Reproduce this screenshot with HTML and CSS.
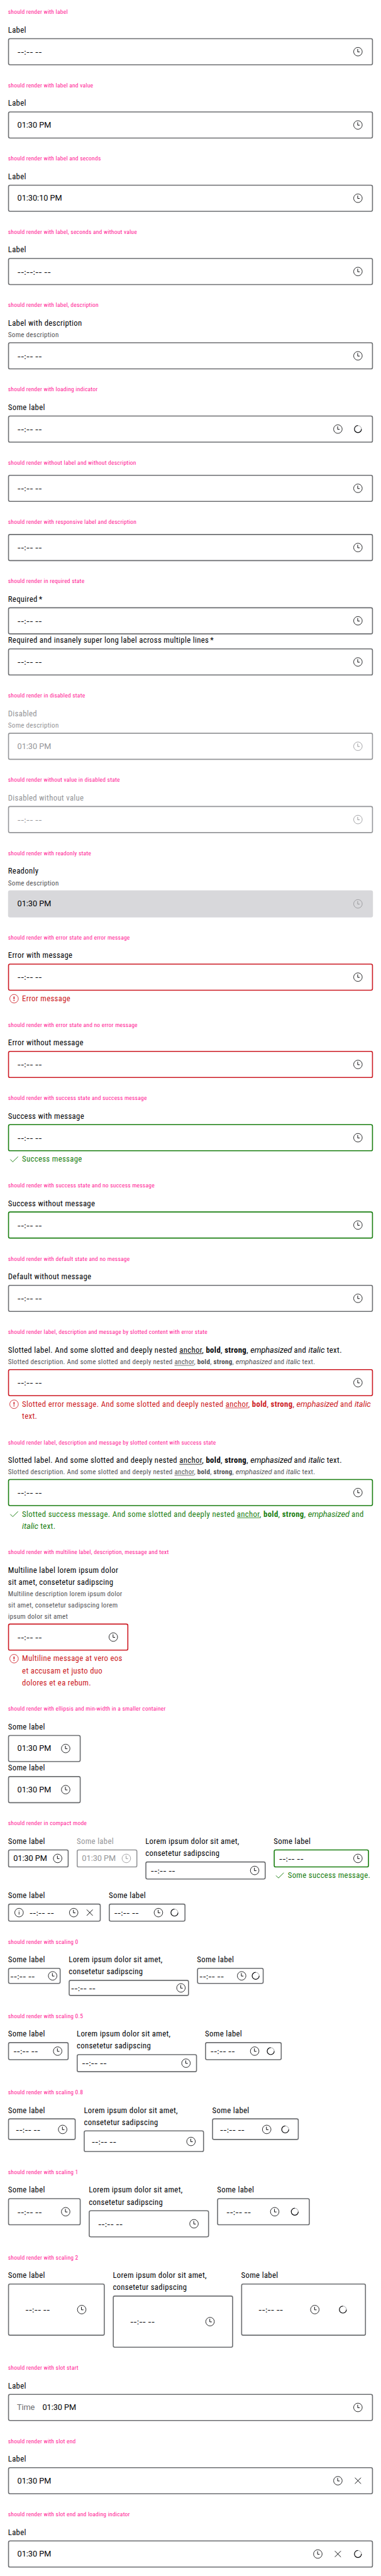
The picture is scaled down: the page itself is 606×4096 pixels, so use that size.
FILE: index.html
```html
<!DOCTYPE html>
<html lang="en">
<head>
<meta charset="utf-8">
<title>Input time overview</title>
<link rel="stylesheet" href="styles.css">
</head>
<body>
<svg class="sprite" aria-hidden="true">
  <symbol id="clock" viewBox="0 0 24 24"><circle cx="12" cy="12" r="8.55" fill="none" stroke="currentColor" stroke-width="1.05"/><path d="M11.5 6.6V12.5H15.5" fill="none" stroke="currentColor" stroke-width="1.2"/></symbol>
  <symbol id="close" viewBox="0 0 24 24"><path d="M6 6L18 18M18 6L6 18" fill="none" stroke="currentColor" stroke-width="1.2"/></symbol>
  <symbol id="spin" viewBox="0 0 24 24"><g fill="none" stroke-width="1.5"><path d="M12 5A7 7 0 0 1 19 12" stroke="#8c8d90" stroke-width="1"/><path d="M19 12A7 7 0 1 1 12 5" stroke="currentColor"/></g></symbol>
  <symbol id="error" viewBox="0 0 24 24"><circle cx="12" cy="12" r="8.55" fill="none" stroke="currentColor" stroke-width="1.05"/><path d="M12 7.6V13M12 14.5V16.4" fill="none" stroke="currentColor" stroke-width="2"/></symbol>
  <symbol id="info" viewBox="0 0 24 24"><circle cx="12" cy="12" r="8.55" fill="none" stroke="currentColor" stroke-width="1.05"/><path d="M12 8V9.2M12 10.5V16" fill="none" stroke="currentColor" stroke-width="1.1"/></symbol>
  <symbol id="check" viewBox="0 0 24 24"><path d="M4.5 12.2L9.4 17.1L20 6.7" fill="none" stroke="currentColor" stroke-width="1.2"/></symbol>
</svg>
<div class="frame">
<main class="page">
  <section><h2>should render with label</h2>
    <div class="field"><label>Label</label><div class="box"><span class="empty">--:-- --</span><svg><use href="#clock"/></svg></div></div></section>
  <section><h2>should render with label and value</h2>
    <div class="field"><label>Label</label><div class="box"><span class="value">01:30 PM</span><svg><use href="#clock"/></svg></div></div></section>
  <section><h2>should render with label and seconds</h2>
    <div class="field"><label>Label</label><div class="box"><span class="value">01:30:10 PM</span><svg><use href="#clock"/></svg></div></div></section>
  <section><h2>should render with label, seconds and without value</h2>
    <div class="field"><label>Label</label><div class="box"><span class="empty">--:--:-- --</span><svg><use href="#clock"/></svg></div></div></section>
  <section><h2>should render with label, description</h2>
    <div class="field"><label>Label with description</label><p class="desc">Some description</p><div class="box"><span class="empty">--:-- --</span><svg><use href="#clock"/></svg></div></div></section>
  <section><h2>should render with loading indicator</h2>
    <div class="field"><label>Some label</label><div class="box"><span class="empty">--:-- --</span><svg><use href="#clock"/></svg><svg><use href="#spin"/></svg></div></div></section>
  <section><h2>should render without label and without description</h2>
    <div class="field"><div class="box"><span class="empty">--:-- --</span><svg><use href="#clock"/></svg></div></div></section>
  <section><h2>should render with responsive label and description</h2>
    <div class="field"><div class="box"><span class="empty">--:-- --</span><svg><use href="#clock"/></svg></div></div></section>
  <section><h2>should render in required state</h2>
    <div class="field"><label>Required <span class="star">*</span></label><div class="box"><span class="empty">--:-- --</span><svg><use href="#clock"/></svg></div></div>
    <div class="field"><label>Required and insanely super long label across multiple lines <span class="star">*</span></label><div class="box"><span class="empty">--:-- --</span><svg><use href="#clock"/></svg></div></div></section>
  <section><h2>should render in disabled state</h2>
    <div class="field disabled"><label>Disabled</label><p class="desc">Some description</p><div class="box"><span class="value">01:30 PM</span><svg><use href="#clock"/></svg></div></div></section>
  <section><h2>should render without value in disabled state</h2>
    <div class="field disabled"><label>Disabled without value</label><div class="box"><span class="empty">--:-- --</span><svg><use href="#clock"/></svg></div></div></section>
  <section><h2>should render with readonly state</h2>
    <div class="field readonly"><label>Readonly</label><p class="desc">Some description</p><div class="box"><span class="value">01:30 PM</span><svg><use href="#clock"/></svg></div></div></section>
  <section><h2>should render with error state and error message</h2>
    <div class="field error"><label>Error with message</label><div class="box"><span class="empty">--:-- --</span><svg><use href="#clock"/></svg></div><div class="msg"><svg><use href="#error"/></svg><p>Error message</p></div></div></section>
  <section><h2>should render with error state and no error message</h2>
    <div class="field error"><label>Error without message</label><div class="box"><span class="empty">--:-- --</span><svg><use href="#clock"/></svg></div></div></section>
  <section><h2>should render with success state and success message</h2>
    <div class="field success"><label>Success with message</label><div class="box"><span class="empty">--:-- --</span><svg><use href="#clock"/></svg></div><div class="msg"><svg><use href="#check"/></svg><p>Success message</p></div></div></section>
  <section><h2>should render with success state and no success message</h2>
    <div class="field success"><label>Success without message</label><div class="box"><span class="empty">--:-- --</span><svg><use href="#clock"/></svg></div></div></section>
  <section><h2>should render with default state and no message</h2>
    <div class="field"><label>Default without message</label><div class="box"><span class="empty">--:-- --</span><svg><use href="#clock"/></svg></div></div></section>
  <section class="slotted"><h2>should render label, description and message by slotted content with error state</h2>
    <div class="field error"><label>Slotted label. And some slotted and deeply nested <a>anchor</a>, <b>bold</b>, <strong>strong</strong>, <em>emphasized</em> and <i>italic</i> text.</label><p class="desc">Slotted description. And some slotted and deeply nested <a>anchor</a>, <b>bold</b>, <strong>strong</strong>, <em>emphasized</em> and <i>italic</i> text.</p><div class="box"><span class="empty">--:-- --</span><svg><use href="#clock"/></svg></div><div class="msg"><svg><use href="#error"/></svg><p>Slotted error message. And some slotted and deeply nested <a>anchor</a>, <b>bold</b>, <strong>strong</strong>, <em>emphasized</em> and <i>italic</i><br>text.</p></div></div></section>
  <section class="slotted"><h2>should render label, description and message by slotted content with success state</h2>
    <div class="field success"><label>Slotted label. And some slotted and deeply nested <a>anchor</a>, <b>bold</b>, <strong>strong</strong>, <em>emphasized</em> and <i>italic</i> text.</label><p class="desc">Slotted description. And some slotted and deeply nested <a>anchor</a>, <b>bold</b>, <strong>strong</strong>, <em>emphasized</em> and <i>italic</i> text.</p><div class="box"><span class="empty">--:-- --</span><svg><use href="#clock"/></svg></div><div class="msg"><svg><use href="#check"/></svg><p>Slotted success message. And some slotted and deeply nested <a>anchor</a>, <b>bold</b>, <strong>strong</strong>, <em>emphasized</em> and<br><i>italic</i> text.</p></div></div></section>
  <section><h2>should render with multiline label, description, message and text</h2>
    <div class="field error w240"><label>Multiline label lorem ipsum dolor<br>sit amet, consetetur sadipscing</label><p class="desc">Multiline description lorem ipsum dolor<br>sit amet, consetetur sadipscing lorem<br>ipsum dolor sit amet</p><div class="box"><span class="empty">--:-- --</span><svg><use href="#clock"/></svg></div><div class="msg"><svg><use href="#error"/></svg><p>Multiline message at vero eos<br>et accusam et justo duo<br>dolores et ea rebum.</p></div></div></section>
  <section><h2>should render with ellipsis and min-width in a smaller container</h2>
    <div class="field w145"><label>Some label</label><div class="box"><span class="value">01:30 PM</span><svg><use href="#clock"/></svg></div></div>
    <div class="field w145"><label>Some label</label><div class="box"><span class="value">01:30 PM</span><svg><use href="#clock"/></svg></div></div></section>
  <section><h2>should render in compact mode</h2>
    <div class="row compact">
      <div class="field"><label>Some label</label><div class="box"><span class="value">01:30 PM</span><svg><use href="#clock"/></svg></div></div>
      <div class="field disabled"><label>Some label</label><div class="box"><span class="value">01:30 PM</span><svg><use href="#clock"/></svg></div></div>
      <div class="field w240"><label>Lorem ipsum dolor sit amet,<br>consetetur sadipscing</label><div class="box"><span class="empty">--:-- --</span><svg><use href="#clock"/></svg></div></div>
      <div class="field success w190"><label>Some label</label><div class="box"><span class="empty">--:-- --</span><svg><use href="#clock"/></svg></div><div class="msg"><svg><use href="#check"/></svg><p>Some success message.</p></div></div>
      <div class="field"><label>Some label</label><div class="box"><svg><use href="#info"/></svg><span class="empty">--:-- --</span><svg><use href="#clock"/></svg><svg><use href="#close"/></svg></div></div>
      <div class="field"><label>Some label</label><div class="box"><span class="empty">--:-- --</span><svg><use href="#clock"/></svg><svg><use href="#spin"/></svg></div></div>
    </div></section>
  <section><h2>should render with scaling 0</h2>
    <div class="row scale-0">
      <div class="field"><label>Some label</label><div class="box"><span class="empty">--:-- --</span><svg><use href="#clock"/></svg></div></div>
      <div class="field w240"><label>Lorem ipsum dolor sit amet,<br>consetetur sadipscing</label><div class="box"><span class="empty">--:-- --</span><svg><use href="#clock"/></svg></div></div>
      <div class="field"><label>Some label</label><div class="box"><span class="empty">--:-- --</span><svg><use href="#clock"/></svg><svg><use href="#spin"/></svg></div></div>
    </div></section>
  <section><h2>should render with scaling 0.5</h2>
    <div class="row compact">
      <div class="field"><label>Some label</label><div class="box"><span class="empty">--:-- --</span><svg><use href="#clock"/></svg></div></div>
      <div class="field w240"><label>Lorem ipsum dolor sit amet,<br>consetetur sadipscing</label><div class="box"><span class="empty">--:-- --</span><svg><use href="#clock"/></svg></div></div>
      <div class="field"><label>Some label</label><div class="box"><span class="empty">--:-- --</span><svg><use href="#clock"/></svg><svg><use href="#spin"/></svg></div></div>
    </div></section>
  <section><h2>should render with scaling 0.8</h2>
    <div class="row scale-08">
      <div class="field"><label>Some label</label><div class="box"><span class="empty">--:-- --</span><svg><use href="#clock"/></svg></div></div>
      <div class="field w240"><label>Lorem ipsum dolor sit amet,<br>consetetur sadipscing</label><div class="box"><span class="empty">--:-- --</span><svg><use href="#clock"/></svg></div></div>
      <div class="field"><label>Some label</label><div class="box"><span class="empty">--:-- --</span><svg><use href="#clock"/></svg><svg><use href="#spin"/></svg></div></div>
    </div></section>
  <section><h2>should render with scaling 1</h2>
    <div class="row">
      <div class="field"><label>Some label</label><div class="box"><span class="empty">--:-- --</span><svg><use href="#clock"/></svg></div></div>
      <div class="field w240"><label>Lorem ipsum dolor sit amet,<br>consetetur sadipscing</label><div class="box"><span class="empty">--:-- --</span><svg><use href="#clock"/></svg></div></div>
      <div class="field"><label>Some label</label><div class="box"><span class="empty">--:-- --</span><svg><use href="#clock"/></svg><svg><use href="#spin"/></svg></div></div>
    </div></section>
  <section><h2>should render with scaling 2</h2>
    <div class="row scale-2">
      <div class="field"><label>Some label</label><div class="box"><span class="empty">--:-- --</span><svg><use href="#clock"/></svg></div></div>
      <div class="field w240"><label>Lorem ipsum dolor sit amet,<br>consetetur sadipscing</label><div class="box"><span class="empty">--:-- --</span><svg><use href="#clock"/></svg></div></div>
      <div class="field"><label>Some label</label><div class="box"><span class="empty">--:-- --</span><svg><use href="#clock"/></svg><svg><use href="#spin"/></svg></div></div>
    </div></section>
  <section><h2>should render with slot start</h2>
    <div class="field"><label>Label</label><div class="box"><span class="prefix">Time</span><span class="value">01:30 PM</span><svg><use href="#clock"/></svg></div></div></section>
  <section><h2>should render with slot end</h2>
    <div class="field"><label>Label</label><div class="box"><span class="value">01:30 PM</span><svg><use href="#clock"/></svg><svg><use href="#close"/></svg></div></div></section>
  <section><h2>should render with slot end and loading indicator</h2>
    <div class="field"><label>Label</label><div class="box"><span class="value">01:30 PM</span><svg><use href="#clock"/></svg><svg><use href="#close"/></svg><svg><use href="#spin"/></svg></div></div></section>
</main>
</div>
</body>
</html>
```
FILE: styles.css
```css
* { box-sizing: border-box; }
html, body { margin: 0; background: #fff; }
.frame { width: 606px; height: 4096px; overflow: hidden; }
.sprite { display: none; }

.page {
  width: 760px;
  transform: scale(.79737, .798);
  transform-origin: 0 0;
  font-family: Roboto, "Liberation Sans", sans-serif;
  font-stretch: 75%;
  font-size: 16px;
  line-height: 24px;
  letter-spacing: .4px;
  color: #010205;
}
section { padding: 16px; }
h2 {
  margin: 0 0 16px;
  font-size: 12px;
  line-height: 16px;
  font-weight: 400;
  letter-spacing: .26px;
  color: #ff1493;
}
.field label { display: block; margin-bottom: 4px; white-space: nowrap; }
.star { margin-left: -1.5px; }
.desc {
  margin: -4px 0 4px;
  font-size: 14px;
  line-height: 22px;
  letter-spacing: .3px;
  color: #535457;
  white-space: nowrap;
}
.slotted .field label { line-height: 23.5px; }
.slotted .field label, .slotted .msg { letter-spacing: .44px; }
em, i { font-stretch: 100%; letter-spacing: -.1px; }

.box {
  --pad: 16px;
  display: flex;
  align-items: center;
  gap: var(--pad);
  height: 54px;
  padding: 0 var(--pad);
  border: 2px solid #6b6d70;
  border-radius: 4px;
}
svg { display: block; flex: none; width: 24px; height: 24px; }
.value, .empty { flex: 1 1 69px; min-width: 69px; white-space: nowrap; }
.value { font-stretch: 100%; letter-spacing: -.05px; padding-left: .5px; }
.empty {
  font-family: Inter, Roboto, sans-serif;
  font-stretch: 100%;
  font-size: 15px;
  font-feature-settings: "calt" 0;
  letter-spacing: -.1px;
  padding: 2px 0 0 .5px;
}
.prefix { width: 34px; font-stretch: 100%; letter-spacing: -.2px; color: #6b6d70; }

.msg { display: flex; gap: 4px; margin-top: 4px; }
.msg p { margin: 0; white-space: nowrap; }
.error .box { border-color: #cc1922; }
.error .msg { color: #cc1922; }
.success .box { border-color: #197e10; }
.success .msg { color: #197e10; }
.disabled, .disabled .desc { color: #949598; }
.disabled .box { border-color: #949598; }
.readonly .box { background: #d8d8db; border-color: #d8d8db; }
.readonly svg { color: #949598; }

.field a { text-decoration: underline; text-underline-offset: 2px; text-decoration-thickness: 1px; }

.w240 { width: 240px; }
.w190 { width: 190px; }
.w145 { width: 145px; }
.row { display: flex; flex-wrap: wrap; align-items: flex-start; gap: 16px; }
.compact .box { --pad: 8px; height: 36px; }
.scale-0 .box { --pad: 4px; height: 32px; padding: 0 2px; }
.scale-08 .box { --pad: 12.8px; height: 43px; }
.scale-2 .box { --pad: 32px; height: 104px; }
```
